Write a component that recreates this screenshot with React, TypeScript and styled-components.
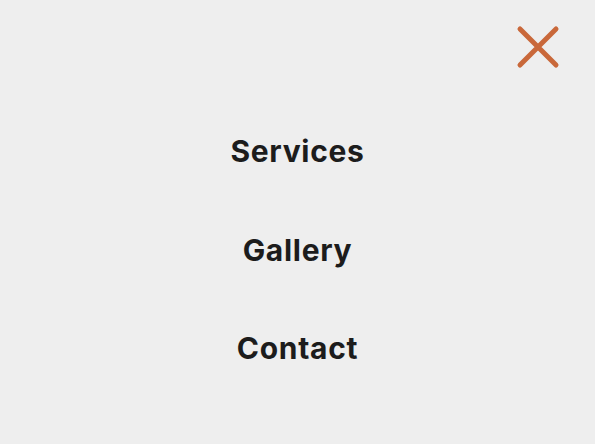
import React from 'react';
import styled, { createGlobalStyle } from 'styled-components';

const GlobalStyle = createGlobalStyle`
  html, body {
    margin: 0;
    padding: 0;
    background: #eeeeee;
  }
  body {
    font-family: Inter, "Noto Sans", sans-serif;
  }
`;

const MenuOverlay = styled.div`
  width: 595px;
  height: 444px;
  box-sizing: border-box;
  background: #eeeeee;
  display: flex;
  flex-direction: column;
  padding: 24px 34px 0 0;
`;

const TopBar = styled.div`
  display: flex;
  justify-content: flex-end;
`;

const CloseButton = styled.button`
  width: 46px;
  height: 46px;
  padding: 0;
  border: 0;
  background: transparent;
  display: flex;
  align-items: center;
  justify-content: center;
  cursor: pointer;
`;

const NavList = styled.nav`
  display: flex;
  flex-direction: column;
  align-items: center;
  gap: 62px;
  margin-top: 63px;
  padding-left: 34px;
`;

const NavLink = styled.a`
  font-size: 30px;
  line-height: 36.5px;
  font-weight: 700;
  color: #1c1c1c;
  text-decoration: none;
  letter-spacing: 0.7px;
`;

const CloseIcon = () => (
  <svg width="46" height="46" viewBox="0 0 46 46" fill="none">
    <path
      d="M5 5L41 41M41 5L5 41"
      stroke="#c9683a"
      strokeWidth="5"
      strokeLinecap="round"
    />
  </svg>
);

const App = () => {
  return (
    <>
      <GlobalStyle />
      <MenuOverlay>
        <TopBar>
          <CloseButton aria-label="Close menu">
            <CloseIcon />
          </CloseButton>
        </TopBar>
        <NavList>
          <NavLink href="#">Services</NavLink>
          <NavLink href="#">Gallery</NavLink>
          <NavLink href="#">Contact</NavLink>
        </NavList>
      </MenuOverlay>
    </>
  );
};

export default App;
